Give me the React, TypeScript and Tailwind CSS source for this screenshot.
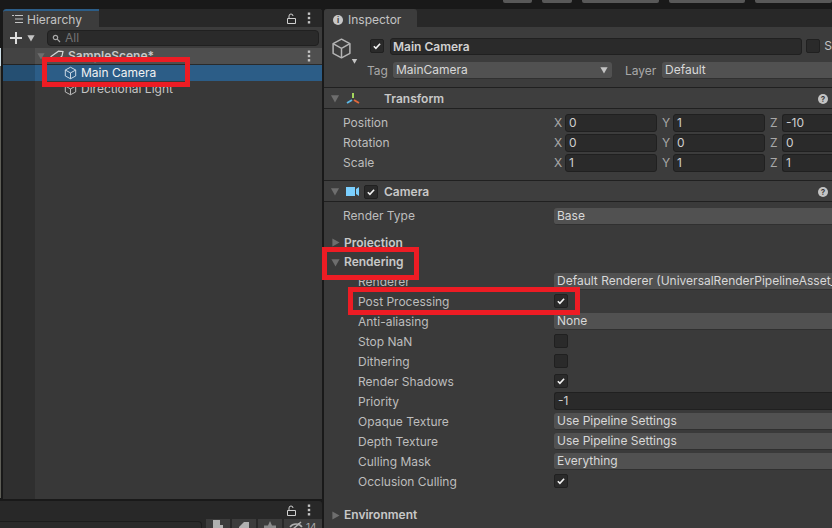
import React from 'react';

const Triangle = ({ dir = 'down', className = 'w-[10px] h-[9px] text-[#6e6e6e]' }: { dir?: 'down' | 'right'; className?: string }) => (
  <svg viewBox="0 0 10 10" className={`shrink-0 ${className}`} fill="currentColor">
    {dir === 'down' ? <path d="M0.5 1.5h9L5 9.5z" /> : <path d="M1.5 0.5v9l8-4.5z" />}
  </svg>
);

const Cube = ({ className = 'w-[14px] h-[14px] text-[#c4c4c4]' }: { className?: string }) => (
  <svg viewBox="0 0 14 14" className={`shrink-0 ${className}`} fill="none" stroke="currentColor" strokeWidth="1" strokeLinejoin="round">
    <path d="M7 0.8l5.6 3v6.4L7 13.2l-5.6-3V3.800z" />
    <path d="M1.400 3.800L7 6.900l5.600-3.100M7 6.900v6.300" />
  </svg>
);

const Check = () => (
  <svg viewBox="0 0 14 14" className="w-[14px] h-[14px]" fill="none" stroke="#f2f2f2" strokeWidth="1.900">
    <path d="M3.300 7.300l2.400 2.300 4.900-5.300" />
  </svg>
);

const Checkbox = ({ checked = false }: { checked?: boolean }) => (
  <div className="w-[14px] h-[14px] shrink-0 rounded-[2px] bg-[#2a2a2a] border border-[#202020] flex items-center justify-center overflow-hidden">
    {checked && <Check />}
  </div>
);

const Lock = () => (
  <svg viewBox="0 0 9 11" className="w-[9px] h-[11px]" fill="none" stroke="#d0d0d0" strokeWidth="1">
    <path d="M0.500 5.500h8v5h-8zM2 5.500V3a2 2 0 0 1 4 0" />
  </svg>
);

const Kebab = () => (
  <svg viewBox="0 0 4 12" className="w-[4px] h-[12px]" fill="#c4c4c4">
    <rect x="0.800" y="0.500" width="2.400" height="2.400" />
    <rect x="0.800" y="4.800" width="2.400" height="2.400" />
    <rect x="0.800" y="9.100" width="2.400" height="2.400" />
  </svg>
);

const Help = () => (
  <div className="w-[10px] h-[10px] rounded-full bg-[#c4c4c4] flex items-center justify-center text-[8px] font-bold leading-none text-[#3c3c3c]">?</div>
);

const Dropdown = ({ text, arrow = false, className = '' }: { text: string; arrow?: boolean; className?: string }) => (
  <div className={`h-[17px] rounded-l-[3px] bg-[#515151] border-b border-[#303030] pl-[3px] flex items-center text-[#d8d8d8] whitespace-nowrap overflow-hidden ${arrow ? 'rounded-r-[3px] justify-between pr-[3px]' : ''} ${className}`}>
    <span>{text}</span>
    {arrow && <Triangle className="w-[8px] h-[8px] text-[#c4c4c4] mr-[1px]" />}
  </div>
);

const Field = ({ text, className = '' }: { text: string; className?: string }) => (
  <div className={`h-[18px] rounded-[3px] bg-[#2a2a2a] border border-[#202020] pl-[3px] flex items-center text-[#cfcfcf] ${className}`}>{text}</div>
);

const TransformRow = ({ label, x, y, z }: { label: string; x: string; y: string; z: string }) => (
  <div className="h-[20px] flex items-center pl-[19px] text-[#bdbdbd]">
    <span className="w-[211px]">{label}</span>
    <span className="w-[11px] text-[#a8a8a8]">X</span>
    <Field text={x} className="w-[92px]" />
    <span className="ml-[5px] w-[11px] text-[#a8a8a8]">Y</span>
    <Field text={y} className="w-[92px]" />
    <span className="ml-[5px] w-[12px] text-[#a8a8a8]">Z</span>
    <Field text={z} className="flex-1 rounded-r-none border-r-0" />
  </div>
);

const PropRow = ({ label, children }: { label: string; children?: React.ReactNode }) => (
  <div className="h-[20px] flex items-center pl-[34px] text-[#bdbdbd]">
    <span className="w-[196px] shrink-0 whitespace-nowrap">{label}</span>
    <div className="flex-1 min-w-0 pb-[2px]">{children}</div>
  </div>
);

const FoldRow = ({ label, open = false, className = 'h-[20px]' }: { label: string; open?: boolean; className?: string }) => (
  <div className={`flex items-center pl-[7px] gap-[4px] font-semibold text-[#c8c8c8] ${className}`}>
    <Triangle dir={open ? 'down' : 'right'} className="w-[9px] h-[9px] text-[#6e6e6e]" />
    <span>{label}</span>
  </div>
);

const RedBox = ({ className }: { className: string }) => (
  <div className={`absolute border-[5px] border-[#ed1c24] pointer-events-none ${className}`} />
);

const Hierarchy = () => (
  <div className="flex-1 min-h-0 flex flex-col rounded-t-[3px] overflow-hidden bg-[#383838]">
    <div className="h-[18px] shrink-0 bg-[#282828] flex items-center pr-[11px]">
      <div className="w-[96px] h-full bg-[#3c3c3c] border-t-2 border-[#2c5d87] flex items-center pl-[8px] pt-[2px] gap-[4px] text-[#c4c4c4] rounded-tl-[3px]">
        <svg viewBox="0 0 12 10" className="w-[12px] h-[10px] -mt-[2px]" fill="none" stroke="#c4c4c4" strokeWidth="1">
          <path d="M1 1.500h2M4 1.500h8M4 5h8M4 8.500h8" />
        </svg>
        <span>Hierarchy</span>
      </div>
      <div className="ml-auto flex items-center gap-[11px]">
        <Lock />
        <Kebab />
      </div>
    </div>
    <div className="h-[21px] shrink-0 bg-[#3c3c3c] flex items-center pl-[7px] pr-[3px] pt-[1px]">
      <svg viewBox="0 0 12 12" className="w-[12px] h-[12px]" fill="#dddddd">
        <path d="M5 0h2v5h5v2H7v5H5V7H0V5h5z" />
      </svg>
      <Triangle className="w-[8px] h-[8px] text-[#c4c4c4] ml-[5px]" />
      <div className="ml-[12px] flex-1 h-[16px] rounded-[4px] bg-[#2a2a2a] border border-[#202020] flex items-center pl-[4px] gap-[4px] text-[#747474]">
        <svg viewBox="0 0 9 9" className="w-[9px] h-[9px]" fill="none" stroke="#a8a8a8" strokeWidth="1.200">
          <circle cx="3.500" cy="3.500" r="2.200" />
          <path d="M5.200 5.200L8 8" />
        </svg>
        <span>All</span>
      </div>
    </div>
    <div className="relative flex-1 min-h-0">
      <div className="h-[17px] bg-[#4f4f4f] border-b border-[#2a2a2a] flex items-center pl-[34px] pr-[11px] font-semibold text-[#c8c8c8]">
        <Triangle className="w-[8px] h-[8px] text-[#6e6e6e]" />
        <svg viewBox="0 0 14 12" className="w-[14px] h-[12px] ml-[5px]" fill="none" stroke="#d4d4d4" strokeWidth="1.200">
          <path d="M1 6.500L8.500 1.200 13 1.500 12 6 7 11 3 10.500z" />
        </svg>
        <span className="ml-[4px]">SampleScene*</span>
        <div className="ml-auto flex"><Kebab /></div>
      </div>
      <div className="h-[16px] bg-[#2c5d87] flex items-center pl-[61px] gap-[4px] text-[#f2f2f2]">
        <Cube className="w-[13px] h-[14px] text-[#d8e2ea]" />
        <span>Main Camera</span>
      </div>
      <div className="h-[16px] flex items-center pl-[61px] gap-[4px] text-[#c4c4c4]">
        <Cube className="w-[13px] h-[14px]" />
        <span>Directional Light</span>
      </div>
      <div className="absolute left-0 top-0 bottom-0 w-[32px] bg-black/15 pointer-events-none" />
    </div>
  </div>
);

const BottomPanel = () => (
  <div className="h-[27px] shrink-0 mt-[2px] -ml-[3px] rounded-tr-[3px] overflow-hidden bg-[#282828]">
    <div className="h-[18px] flex items-center justify-end gap-[11px] pr-[11px]">
      <Lock />
      <Kebab />
    </div>
    <div className="h-[20px] flex items-start gap-[2px] bg-[#282828]">
      <div className="w-[202px] h-[20px] mt-[2px] mr-[2px] rounded-tr-[4px] bg-[#2a2a2a] border-t border-r border-[#1c1c1c]" />
      <div className="w-[24px] h-[20px] bg-[#3c3c3c] flex justify-center pt-[1px]">
        <svg viewBox="0 0 12 12" className="w-[12px] h-[12px]" fill="#b0b0b0"><path d="M1 0h7v5h3v7H1z" /></svg>
      </div>
      <div className="w-[24px] h-[20px] bg-[#3c3c3c] flex justify-center pt-[2px]">
        <svg viewBox="0 0 12 12" className="w-[12px] h-[12px]" fill="#b0b0b0"><path d="M1 6l5-5h5v10H1z" /></svg>
      </div>
      <div className="w-[24px] h-[20px] bg-[#3c3c3c] flex justify-center pt-[2px]">
        <svg viewBox="0 0 12 12" className="w-[12px] h-[12px]" fill="#8a8a8a"><path d="M6 0l2 4.500h4V12H0V4.500h4z" /></svg>
      </div>
      <div className="flex-1 h-[20px] bg-[#3c3c3c] flex items-start pl-[5px] pt-[1px] gap-[3px] text-[#a8a8a8] text-[10px] leading-[14px]">
        <svg viewBox="0 0 14 10" className="w-[14px] h-[10px] mt-[1px]" fill="none" stroke="#b0b0b0" strokeWidth="1.500"><path d="M1 6c3-4 9-4 12 0M3 9l9-8" /></svg>
        <span>14</span>
      </div>
    </div>
  </div>
);

const Inspector = () => (
  <div className="flex-1 min-w-0 flex flex-col rounded-t-[3px] overflow-hidden bg-[#3c3c3c]">
    <div className="h-[18px] shrink-0 bg-[#282828]">
      <div className="w-[93px] h-full bg-[#3c3c3c] flex items-center pl-[9px] pt-[4px] gap-[5px] text-[#c4c4c4] rounded-t-[3px]">
        <div className="w-[10px] h-[10px] rounded-full bg-[#c8c8c8] flex items-center justify-center text-[8px] font-bold leading-none text-[#3c3c3c]">i</div>
        <span>Inspector</span>
      </div>
    </div>

    <div className="h-[60px] shrink-0 relative flex">
      <div className="w-[46px] shrink-0 pl-[7px] pt-[11px] flex flex-col">
        <Cube className="w-[21px] h-[21px] text-[#b4b4b4]" />
        <Triangle className="w-[7px] h-[6px] text-[#c4c4c4] ml-[20px] -mt-[1px]" />
      </div>
      <div className="flex-1 min-w-0 pt-[10px]">
        <div className="h-[18px] flex items-center">
          <Checkbox checked />
          <div className="ml-[6px] w-[415px] h-[17px] rounded-[3px] bg-[#2a2a2a] border border-[#202020] pl-[2px] pt-[1px] flex items-center font-semibold text-[#d0d0d0]">Main Camera</div>
          <div className="ml-[4px]"><Checkbox /></div>
          <span className="ml-[4px] text-[#c4c4c4]">S</span>
        </div>
        <div className="h-[17px] mt-[7px] -ml-[3px] flex items-center text-[#a8a8a8] whitespace-nowrap">
          <span className="w-[26px]">Tag</span>
          <Dropdown text="MainCamera" arrow className="w-[219px]" />
          <span className="ml-[13px] w-[37px]">Layer</span>
          <Dropdown text="Default" className="flex-1" />
        </div>
      </div>
    </div>

    <div className="h-[22px] shrink-0 border-y border-[#202020] bg-[#3e3e3e] flex items-center pl-[6px] pr-[4px] pt-[1px] font-semibold text-[#c8c8c8]">
      <Triangle />
      <svg viewBox="0 0 14 12" className="w-[14px] h-[12px] ml-[6px]" fill="none" strokeWidth="2">
        <path d="M7 0v5" stroke="#a4d65e" />
        <path d="M1 10l5-3" stroke="#5cb8e6" />
        <path d="M13 10L8 7" stroke="#e0683c" />
      </svg>
      <span className="ml-[24px]">Transform</span>
      <div className="ml-auto"><Help /></div>
    </div>
    <div className="h-[71px] shrink-0 pt-[4px]">
      <TransformRow label="Position" x="0" y="1" z="-10" />
      <TransformRow label="Rotation" x="0" y="0" z="0" />
      <TransformRow label="Scale" x="1" y="1" z="1" />
    </div>

    <div className="h-[22px] shrink-0 border-y border-[#202020] bg-[#3e3e3e] flex items-center pl-[6px] pr-[4px] pt-[1px] font-semibold text-[#c8c8c8]">
      <Triangle />
      <svg viewBox="0 0 13 9" className="w-[13px] h-[9px] ml-[6px]" fill="#7bd0ff">
        <path d="M0 0h9v9H0zM10 2l3-2v9l-3-2z" />
      </svg>
      <span className="ml-[5px]"><Checkbox checked /></span>
      <span className="ml-[6px]">Camera</span>
      <div className="ml-auto"><Help /></div>
    </div>

    <div className="flex-1 min-h-0 bg-[#3a3a3a] pt-[4px]">
      <div className="h-[20px] flex items-center pl-[19px] text-[#bdbdbd]">
        <span className="w-[211px] shrink-0">Render Type</span>
        <Dropdown text="Base" className="flex-1" />
      </div>
      <div className="h-[7px]" />
      <FoldRow label="Projection" className="h-[19px]" />
      <FoldRow label="Rendering" open />
      <PropRow label="Renderer"><Dropdown text="Default Renderer (UniversalRenderPipelineAsset_Renderer)" /></PropRow>
      <PropRow label="Post Processing"><Checkbox checked /></PropRow>
      <PropRow label="Anti-aliasing"><Dropdown text="None" /></PropRow>
      <PropRow label="Stop NaN"><Checkbox /></PropRow>
      <PropRow label="Dithering"><Checkbox /></PropRow>
      <PropRow label="Render Shadows"><Checkbox checked /></PropRow>
      <PropRow label="Priority"><Field text="-1" className="rounded-r-none border-r-0" /></PropRow>
      <PropRow label="Opaque Texture"><Dropdown text="Use Pipeline Settings" /></PropRow>
      <PropRow label="Depth Texture"><Dropdown text="Use Pipeline Settings" /></PropRow>
      <PropRow label="Culling Mask"><Dropdown text="Everything" /></PropRow>
      <PropRow label="Occlusion Culling"><Checkbox checked /></PropRow>
      <div className="h-[13px]" />
      <FoldRow label="Environment" />
    </div>
  </div>
);

const App: React.FC = () => (
  <div className="relative w-[832px] h-[528px] overflow-hidden bg-[#191919] font-[Inter,sans-serif] text-[12px] leading-none">
    <div className="h-[9px] flex items-start pl-[503px]">
      <div className="w-[30px] h-[3px] rounded-b-[2px] bg-[#585858]" />
      <div className="w-[30px] h-[3px] ml-[10px] rounded-b-[2px] bg-[#585858]" />
      <div className="w-[78px] h-[3px] ml-[10px] rounded-b-[2px] bg-[#585858]" />
      <div className="w-[78px] h-[3px] ml-[10px] rounded-b-[2px] bg-[#585858]" />
      <div className="w-[78px] h-[3px] ml-[10px] rounded-b-[2px] bg-[#585858]" />
    </div>
    <div className="h-[519px] flex">
      <div className="w-[322px] shrink-0 pl-[3px] flex flex-col">
        <Hierarchy />
        <BottomPanel />
      </div>
      <div className="ml-[2px] flex-1 min-w-0 flex">
        <Inspector />
      </div>
    </div>

    {/* sliver of the window behind the editor */}
    <div className="absolute left-0 top-[48px] w-px h-[18px] bg-[#cfe0e8]" />
    <div className="absolute left-0 top-[66px] w-px h-[432px] bg-[#5f5f58]" />

    <RedBox className="left-[42px] top-[57px] w-[148px] h-[30px]" />
    <RedBox className="left-[322px] top-[247px] w-[97px] h-[33px]" />
    <RedBox className="left-[348px] top-[287px] w-[232px] h-[28px]" />
  </div>
);

export default App;
